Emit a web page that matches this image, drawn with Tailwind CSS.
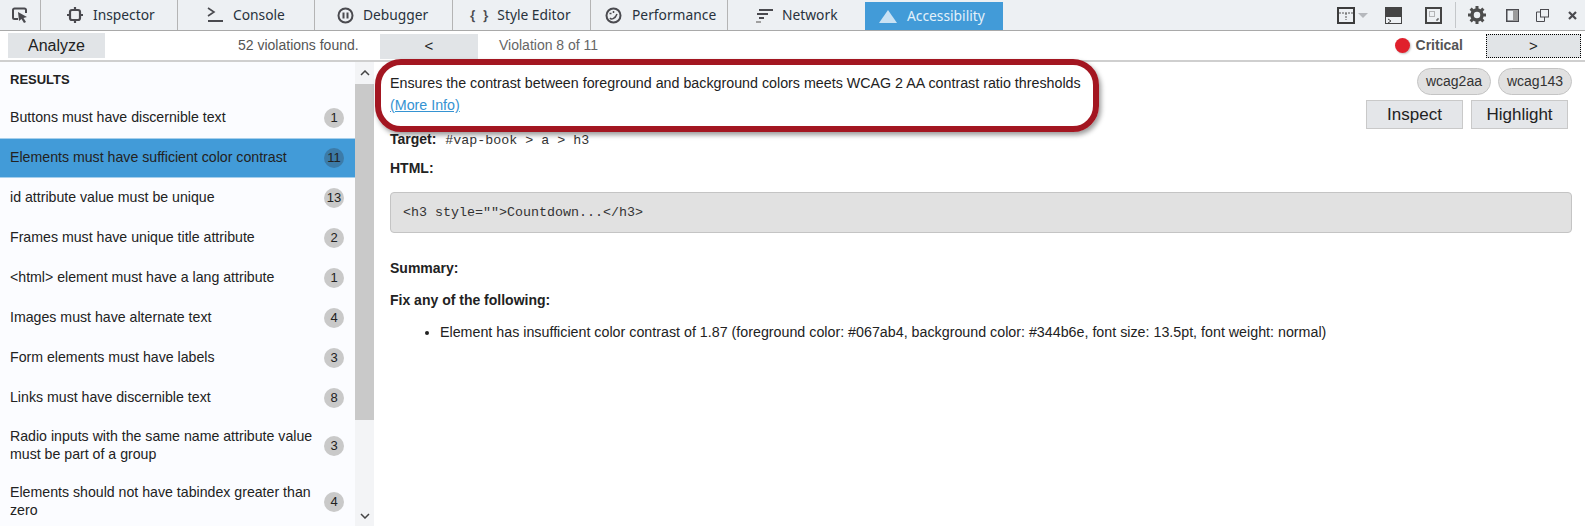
<!DOCTYPE html>
<html lang="en">
<head>
  <meta charset="UTF-8" />
  <title>Accessibility</title>
  <script src="https://cdn.jsdelivr.net/npm/@tailwindcss/browser@4"></script>
</head>
<body class="relative w-[1585px] h-[526px] overflow-hidden bg-white text-[#222] font-['Liberation_Sans',Arial,sans-serif]">

  <!-- Devtools tabs -->
  <header class="flex items-stretch h-[31px] bg-[#edf0f3] border-b border-[#a9a9a9] font-['Noto_Sans',sans-serif] text-[13.800px] text-[#28323c]">
    <div class="w-[41px] flex items-center justify-center border-r border-[#b4b4b4]">
      <svg width="17" height="16" viewBox="0 0 17 16" fill="none"><path d="M6 12H2.500A1.500 1.500 0 0 1 1 10.500V3a1.500 1.500 0 0 1 1.500-1.500h10A1.500 1.500 0 0 1 14 3v3" stroke="#4a4a4f" stroke-width="2"/><path d="M6 5l9 5-3.500 1 2.500 4-2 1-2.500-4L7 14z" fill="#4a4a4f"/></svg>
    </div>
    <div class="w-[137px] flex items-center gap-[10px] pl-[26px] border-r border-[#b4b4b4]">
      <svg width="16" height="16" viewBox="0 0 16 16" fill="none"><rect x="3" y="3" width="10" height="10" rx="2" stroke="#4a4a4f" stroke-width="2.200"/><path d="M8 0v3M8 13v3M0 8h3M13 8h3" stroke="#4a4a4f" stroke-width="2.200"/></svg>
      <span>Inspector</span>
    </div>
    <div class="w-[137px] flex items-center gap-[10px] pl-[29px] border-r border-[#b4b4b4]">
      <svg width="16" height="16" viewBox="0 0 16 16" fill="none"><path d="M1 1l6 4-6 4" stroke="#4a4a4f" stroke-width="1.600"/><path d="M1 14h15" stroke="#4a4a4f" stroke-width="2"/></svg>
      <span>Console</span>
    </div>
    <div class="w-[138px] flex items-center gap-[9px] pl-[22px] border-r border-[#b4b4b4]">
      <svg width="17" height="17" viewBox="0 0 17 17" fill="none"><circle cx="8.500" cy="8.500" r="7" stroke="#4a4a4f" stroke-width="2"/><path d="M6.500 5.500v6M10.500 5.500v6" stroke="#4a4a4f" stroke-width="2"/></svg>
      <span>Debugger</span>
    </div>
    <div class="w-[138px] flex items-center gap-[7px] pl-[17px] border-r border-[#b4b4b4]">
      <span class="font-semibold text-[#4a4a4f] tracking-[2px]">{ }</span>
      <span>Style Editor</span>
    </div>
    <div class="w-[137px] flex items-center gap-[10px] pl-[14px] border-r border-[#b4b4b4]">
      <svg width="17" height="17" viewBox="0 0 17 17" fill="none"><circle cx="8.500" cy="8.500" r="7" stroke="#4a4a4f" stroke-width="2"/><path d="M5 11c1 1.500 5 1.500 7-4M4.500 6.500h2M8.500 4v2" stroke="#4a4a4f" stroke-width="1.500"/></svg>
      <span>Performance</span>
    </div>
    <div class="w-[137px] flex items-center gap-[9px] pl-[28px]">
      <svg width="17" height="16" viewBox="0 0 17 16" fill="none"><path d="M3 3h14" stroke="#4a4a4f" stroke-width="2"/><path d="M1 7h11" stroke="#4a4a4f" stroke-width="2"/><path d="M3 11h5" stroke="#4a4a4f" stroke-width="2"/><path d="M0 15h5" stroke="#a0a0a0" stroke-width="2"/></svg>
      <span>Network</span>
    </div>
    <div class="w-[138px] flex items-center gap-[10px] pl-[14px] mt-[2px] bg-[#429bd8] text-[#e4f1fa]">
      <svg width="18" height="13" viewBox="0 0 18 13"><path d="M9 0l9 13H0z" fill="#c9e2f4"/></svg>
      <span>Accessibility</span>
    </div>
    <div class="flex-1 flex items-center justify-end pr-[8px]">
      <svg width="18" height="17" viewBox="0 0 18 17" fill="none"><rect x="1" y="1" width="16" height="15" stroke="#3c3c3c" stroke-width="2"/><path d="M2 6h14M9 6v7" stroke="#555" stroke-dasharray="2 1"/></svg>
      <svg class="ml-[3px]" width="10" height="5" viewBox="0 0 10 5"><path d="M0 0h10L5 5z" fill="#b5b8bc"/></svg>
      <svg class="ml-[17px]" width="17" height="17" viewBox="0 0 17 17" fill="none"><rect x="0.500" y="0.500" width="16" height="16" stroke="#444"/><rect x="0" y="0" width="17" height="10" fill="#444"/><path d="M3 12l3 2-3 2" stroke="#444"/></svg>
      <svg class="ml-[23px]" width="17" height="17" viewBox="0 0 17 17" fill="none"><rect x="1" y="1" width="15" height="15" stroke="#444" stroke-width="2"/><rect x="4.500" y="4.500" width="5" height="5" stroke="#777" stroke-dasharray="1 1"/><path d="M11 13h2v-2" stroke="#444"/></svg>
      <div class="ml-[13px] w-px h-[26px] bg-[#c4c7ca]"></div>
      <svg class="ml-[12px]" width="18" height="18" viewBox="0 0 18 18" fill="none"><circle cx="9" cy="9" r="5" stroke="#4d4d4d" stroke-width="3.500"/><path d="M9 0v4M9 14v4M0 9h4M14 9h4M2.600 2.600l3 3M12.400 12.400l3 3M15.400 2.600l-3 3M5.600 12.400l-3 3" stroke="#4d4d4d" stroke-width="3"/></svg>
      <svg class="ml-[20px]" width="13" height="13" viewBox="0 0 13 13" fill="none"><rect x="0.750" y="0.750" width="11.500" height="11.500" stroke="#4a4a4f" stroke-width="1.500"/><rect x="7" y="1" width="5" height="11" fill="#9b9b9b"/></svg>
      <svg class="ml-[17px]" width="13" height="13" viewBox="0 0 13 13" fill="none"><rect x="4.500" y="0.500" width="8" height="7.500" stroke="#4a4a4f"/><path d="M4.500 3H.5v9.500h8V8" stroke="#4a4a4f"/></svg>
      <svg class="ml-[19px]" width="9" height="9" viewBox="0 0 9 9" fill="none"><path d="M1 1l7 7M8 1L1 8" stroke="#4a4a4f" stroke-width="2.200"/></svg>
    </div>
  </header>

  <!-- Analyze / violations toolbar -->
  <div class="relative flex items-center h-[31px] border-b-2 border-[#cfcfcf] text-[14px]">
    <button class="ml-[8px] w-[97px] h-[25px] bg-[#e1e4e7] text-[16px] text-[#222]">Analyze</button>
    <span class="ml-[133px] w-[142px] text-[#555]">52 violations found.</span>
    <button class="w-[98px] h-[25px] mt-px bg-[#e1e4e7] text-[15px]">&lt;</button>
    <span class="ml-[21px] text-[#666]">Violation 8 of 11</span>
    <div class="ml-auto mr-[23px] flex items-center gap-[6px]">
      <span class="w-[15px] h-[15px] rounded-full bg-[#e0202c] shadow-[1px_1px_2px_rgba(0,0,0,0.25)]"></span>
      <span class="font-bold text-[#555] text-[14px]">Critical</span>
    </div>
    <button class="mr-[4px] w-[95px] h-[24px] bg-[#e1e4e7] border border-dotted border-black text-[15px]">&gt;</button>
  </div>

  <div class="flex h-[464px]">
    <!-- Results list -->
    <aside class="w-[355px] shrink-0 h-full overflow-hidden bg-[#fbfcff] text-[14.170px] text-[#222]">
      <h2 class="pl-[10px] pt-[8px] h-[36px] text-[13px] font-bold">RESULTS</h2>
      <ul>
        <li class="flex items-center justify-between h-[40px] pl-[10px] pr-[11px]"><span>Buttons must have discernible text</span><span class="w-[20px] h-[20px] rounded-full bg-[#c9c9c9] flex items-center justify-center text-[13px]">1</span></li>
        <li class="flex items-center justify-between h-[40px] pl-[10px] pr-[11px] bg-[#429bd8] border-y border-[#a6cfec]"><span>Elements must have sufficient color contrast</span><span class="w-[20px] h-[20px] rounded-full bg-[#3c7ba8] flex items-center justify-center text-[13px]">11</span></li>
        <li class="flex items-center justify-between h-[40px] pl-[10px] pr-[11px]"><span>id attribute value must be unique</span><span class="w-[20px] h-[20px] rounded-full bg-[#c9c9c9] flex items-center justify-center text-[13px]">13</span></li>
        <li class="flex items-center justify-between h-[40px] pl-[10px] pr-[11px]"><span>Frames must have unique title attribute</span><span class="w-[20px] h-[20px] rounded-full bg-[#c9c9c9] flex items-center justify-center text-[13px]">2</span></li>
        <li class="flex items-center justify-between h-[40px] pl-[10px] pr-[11px]"><span>&lt;html&gt; element must have a lang attribute</span><span class="w-[20px] h-[20px] rounded-full bg-[#c9c9c9] flex items-center justify-center text-[13px]">1</span></li>
        <li class="flex items-center justify-between h-[40px] pl-[10px] pr-[11px]"><span>Images must have alternate text</span><span class="w-[20px] h-[20px] rounded-full bg-[#c9c9c9] flex items-center justify-center text-[13px]">4</span></li>
        <li class="flex items-center justify-between h-[40px] pl-[10px] pr-[11px]"><span>Form elements must have labels</span><span class="w-[20px] h-[20px] rounded-full bg-[#c9c9c9] flex items-center justify-center text-[13px]">3</span></li>
        <li class="flex items-center justify-between h-[40px] pl-[10px] pr-[11px]"><span>Links must have discernible text</span><span class="w-[20px] h-[20px] rounded-full bg-[#c9c9c9] flex items-center justify-center text-[13px]">8</span></li>
        <li class="flex items-center justify-between h-[56px] pl-[10px] pr-[11px] leading-[18px]"><span class="w-[305px] -mt-[3px]">Radio inputs with the same name attribute value must be part of a group</span><span class="w-[20px] h-[20px] rounded-full bg-[#c9c9c9] flex items-center justify-center text-[13px]">3</span></li>
        <li class="flex items-center justify-between h-[56px] pl-[10px] pr-[11px] leading-[18px]"><span class="w-[305px] -mt-[3px]">Elements should not have tabindex greater than zero</span><span class="w-[20px] h-[20px] rounded-full bg-[#c9c9c9] flex items-center justify-center text-[13px]">4</span></li>
      </ul>
    </aside>

    <!-- Scrollbar -->
    <div class="w-[19px] shrink-0 flex flex-col bg-[#f3f4f6]">
      <div class="h-[22px] flex items-center justify-center"><svg width="10" height="6" viewBox="0 0 10 6" fill="none"><path d="M1 5l4-4 4 4" stroke="#444" stroke-width="1.500"/></svg></div>
      <div class="h-[336px] bg-[#c9c9c9]"></div>
      <div class="mt-auto h-[20px] flex items-center justify-center"><svg width="10" height="6" viewBox="0 0 10 6" fill="none"><path d="M1 1l4 4 4-4" stroke="#444" stroke-width="1.500"/></svg></div>
    </div>

    <!-- Violation detail -->
    <main class="flex-1 pl-[16px] pr-[13px] text-[14.270px] text-[#222]">
      <div class="flex justify-between h-[71px]">
        <div class="pt-[10px] leading-[22px]">
          <p>Ensures the contrast between foreground and background colors meets WCAG 2 AA contrast ratio thresholds</p>
          <a class="text-[#3593d2] underline">(More Info)</a>
        </div>
        <div class="flex flex-col items-end pt-[6px] pr-[4px]">
          <div class="flex gap-[7px] -mr-[4px] text-[14px]">
            <span class="h-[27px] px-[8px] flex items-center rounded-full border border-[#c4c4c4] bg-[#e1e1e1] text-[#333]">wcag2aa</span>
            <span class="h-[27px] px-[8px] flex items-center rounded-full border border-[#c4c4c4] bg-[#e1e1e1] text-[#333]">wcag143</span>
          </div>
          <div class="flex gap-[8px] mt-[5px]">
            <button class="w-[97px] h-[29px] bg-[#e4e6e9] border border-[#c9c9c9] text-[17px]">Inspect</button>
            <button class="w-[97px] h-[29px] bg-[#e4e6e9] border border-[#c9c9c9] text-[17px]">Highlight</button>
          </div>
        </div>
      </div>
      <p class="font-bold text-[14px] leading-[16px] -mt-[2px]">Target: <span class="ml-[5px] font-normal font-['Liberation_Mono',monospace] text-[13.330px] text-[#333]">#vap-book &gt; a &gt; h3</span></p>
      <p class="font-bold text-[14px] leading-[16px] mt-[11px]">HTML:</p>
      <pre class="mt-[16px] h-[41px] flex items-center px-[12px] bg-[#e1e1e1] border border-[#c4c4c4] rounded-[4px] font-['Liberation_Mono',monospace] text-[13.330px] text-[#333]">&lt;h3 style=""&gt;Countdown...&lt;/h3&gt;</pre>
      <p class="font-bold text-[14px] leading-[16px] mt-[27px]">Summary:</p>
      <p class="font-bold text-[14px] leading-[16px] mt-[16px]">Fix any of the following:</p>
      <ul class="mt-[16px] pl-[50px] list-disc leading-[16px]">
        <li>Element has insufficient color contrast of 1.87 (foreground color: #067ab4, background color: #344b6e, font size: 13.5pt, font weight: normal)</li>
      </ul>
    </main>
  </div>

  <!-- Red annotation round the description -->
  <div class="absolute left-[375px] top-[59px] w-[724px] h-[73px] rounded-[26px] border-[6px] border-[#a31621] shadow-[2px_3px_5px_rgba(0,0,0,0.4)]"></div>
</body>
</html>
